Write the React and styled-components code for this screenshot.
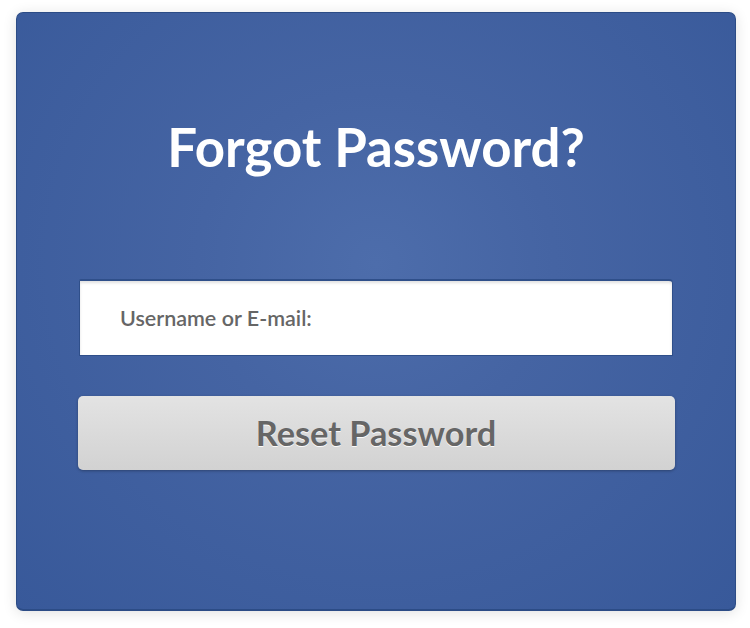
import React from "react";
import styled, { createGlobalStyle } from "styled-components";

const GlobalStyle = createGlobalStyle`
  html, body {
    margin: 0;
    padding: 0;
    background: #ffffff;
  }
  body {
    font-family: Lato, "Open Sans", sans-serif;
  }
`;

const Page = styled.div`
  width: 750px;
  height: 628px;
  padding: 12px 14px 17px 16px;
  box-sizing: border-box;
`;

const Card = styled.form`
  height: 100%;
  box-sizing: border-box;
  border: 1px solid #2c4c86;
  border-bottom-width: 2px;
  border-radius: 7px;
  background: radial-gradient(
    ellipse at 50% 42%,
    #4d6dab 0%,
    #4564a3 35%,
    #38599a 100%
  );
  box-shadow: 0 2px 14px rgba(0, 0, 0, 0.12);
  display: flex;
  flex-direction: column;
  align-items: center;
  padding: 108px 61px 0 61px;
`;

const Title = styled.h1`
  margin: 0;
  font-family: Lato, sans-serif;
  font-weight: 700;
  font-size: 52.8px;
  line-height: 52px;
  color: #ffffff;
`;

const Field = styled.div`
  margin-top: 106px;
  width: 594px;
  height: 77px;
  box-sizing: border-box;
  border: 1px solid #2f4f8a;
  border-top-width: 2px;
  border-radius: 2px 4px 0 0;
  background: #ffffff;
  box-shadow: inset 0 2px 3px rgba(0, 0, 0, 0.12);
  display: flex;
  align-items: center;
  padding-left: 40px;
`;

const Input = styled.input`
  border: none;
  outline: none;
  background: transparent;
  width: 100%;
  font-family: Lato, sans-serif;
  font-weight: 600;
  font-size: 21.5px;
  color: #666;
  padding: 0;

  &::placeholder {
    color: #666666;
    opacity: 1;
  }
`;

const Button = styled.button`
  margin-top: 40px;
  width: 597px;
  height: 74px;
  border: none;
  border-radius: 5px;
  background: linear-gradient(to bottom, #e3e3e3 0%, #d2d2d2 100%);
  box-shadow: 0 1px 3px rgba(0, 0, 0, 0.3);
  font-family: Lato, sans-serif;
  font-weight: 700;
  font-size: 34.3px;
  color: #666666;
  text-shadow: 0 1px 0 rgba(255, 255, 255, 0.9);
  cursor: pointer;
  padding: 0 0 2px 0;
`;

export default function App() {
  return (
    <>
      <GlobalStyle />
      <Page>
        <Card onSubmit={(e) => e.preventDefault()}>
          <Title>Forgot Password?</Title>
          <Field>
            <Input type="text" placeholder="Username or E-mail:" />
          </Field>
          <Button type="submit">Reset Password</Button>
        </Card>
      </Page>
    </>
  );
}
